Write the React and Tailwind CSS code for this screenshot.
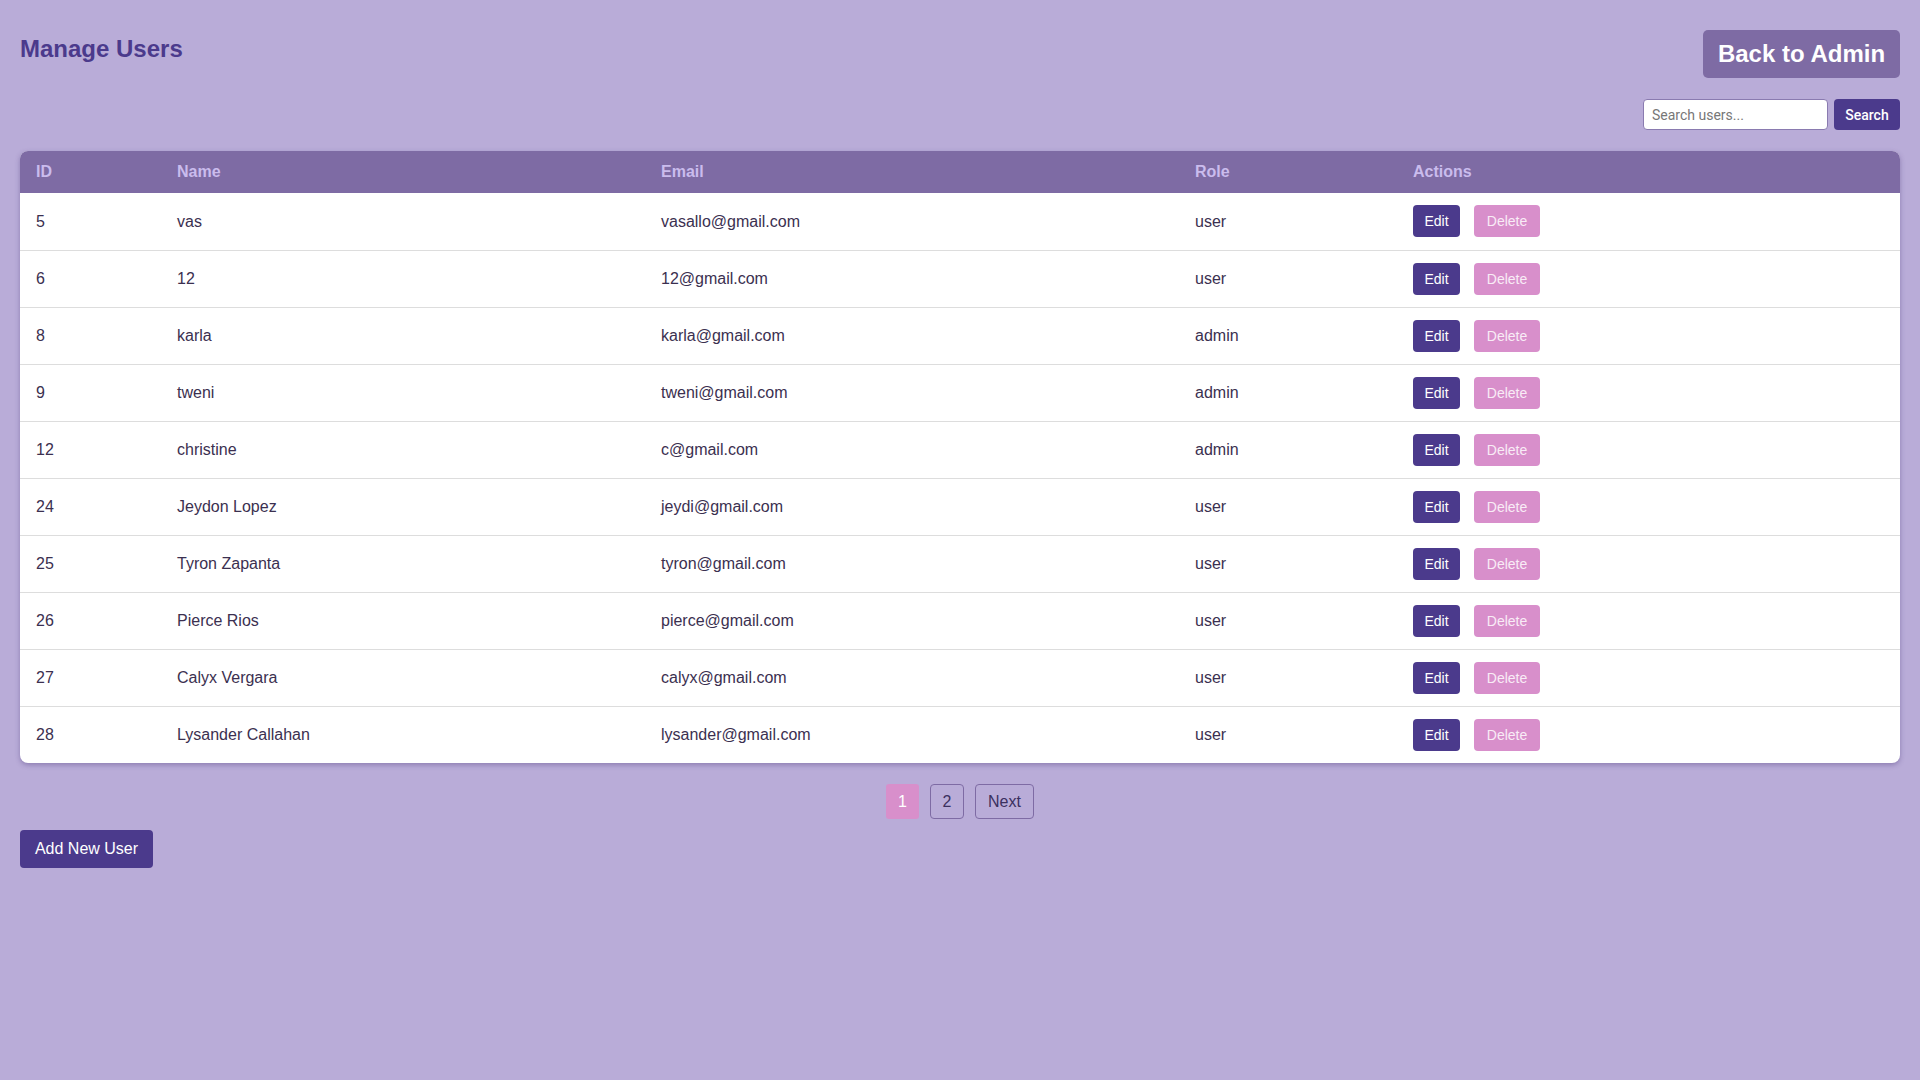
import React from 'react';

const users = [
  { id: 5, name: 'vas', email: 'vasallo@gmail.com', role: 'user' },
  { id: 6, name: '12', email: '12@gmail.com', role: 'user' },
  { id: 8, name: 'karla', email: 'karla@gmail.com', role: 'admin' },
  { id: 9, name: 'tweni', email: 'tweni@gmail.com', role: 'admin' },
  { id: 12, name: 'christine', email: 'c@gmail.com', role: 'admin' },
  { id: 24, name: 'Jeydon Lopez', email: 'jeydi@gmail.com', role: 'user' },
  { id: 25, name: 'Tyron Zapanta', email: 'tyron@gmail.com', role: 'user' },
  { id: 26, name: 'Pierce Rios', email: 'pierce@gmail.com', role: 'user' },
  { id: 27, name: 'Calyx Vergara', email: 'calyx@gmail.com', role: 'user' },
  { id: 28, name: 'Lysander Callahan', email: 'lysander@gmail.com', role: 'user' },
];

const UserRow = ({ user }) => (
  <tr className="h-[57px] border-t border-[#dddddd] first:border-t-0">
    <td className="px-4 pt-px">{user.id}</td>
    <td className="px-4 pt-px">{user.name}</td>
    <td className="px-4 pt-px">{user.email}</td>
    <td className="px-4 pt-px">{user.role}</td>
    <td className="px-4">
      <div className="flex items-center gap-[14px]">
        <button className="h-8 w-[47px] bg-[#4b3a8c] text-white text-sm rounded-[4px]">Edit</button>
        <button className="h-8 w-[66px] bg-[#d88fcb] text-[#f8ecf6] text-sm rounded-[4px]">Delete</button>
      </div>
    </td>
  </tr>
);

export default function App() {
  return (
    <div className="min-h-screen bg-[#b9acd8] p-5 font-['Liberation_Sans',Arial,sans-serif] text-[#3b3050]">
      <div className="flex items-start justify-between">
        <h2 className="mt-[15px] text-2xl font-bold text-[#4b3a8c] leading-[27px]">Manage Users</h2>
        <button className="mt-[10px] h-12 w-[197px] bg-[#7e6ba4] text-white text-2xl font-bold rounded-[5px]">Back to Admin</button>
      </div>

      <div className="mt-[21px] flex justify-end gap-[6px]">
        <input
          type="text"
          placeholder="Search users..."
          className="w-[185px] h-[31px] px-2 bg-white border border-[#8a7bb0] rounded-[4px] text-sm font-['Roboto',sans-serif] placeholder:text-[#777777] outline-none"
        />
        <button className="w-[66px] h-[31px] bg-[#4b3a8c] text-white text-sm font-medium font-['Roboto',sans-serif] rounded-[4px]">Search</button>
      </div>

      <div className="mt-[21px] bg-white rounded-lg overflow-hidden shadow-[0_2px_5px_rgba(60,40,110,0.35)]">
        <table className="w-full border-collapse text-base text-left">
          <thead>
            <tr className="h-[42px] bg-[#7e6ba4] text-[#cabced]">
              <th className="w-[141px] px-4 font-bold">ID</th>
              <th className="w-[484px] px-4 font-bold">Name</th>
              <th className="w-[534px] px-4 font-bold">Email</th>
              <th className="w-[218px] px-4 font-bold">Role</th>
              <th className="px-4 font-bold">Actions</th>
            </tr>
          </thead>
          <tbody>
            {users.map(u => <UserRow key={u.id} user={u} />)}
          </tbody>
        </table>
      </div>

      <div className="mt-[21px] flex justify-center gap-[11px]">
        <button className="w-[33px] h-[35px] bg-[#d88fcb] text-white rounded-[3px]">1</button>
        <button className="w-[34px] h-[35px] border border-[#7e6ba4] text-[#3b3060] rounded-[4px]">2</button>
        <button className="w-[59px] h-[35px] border border-[#7e6ba4] text-[#3b3060] rounded-[4px]">Next</button>
      </div>

      <button className="mt-[11px] h-[38px] w-[133px] bg-[#4b3a8c] text-white text-base rounded-[4px]">Add New User</button>
    </div>
  );
}
